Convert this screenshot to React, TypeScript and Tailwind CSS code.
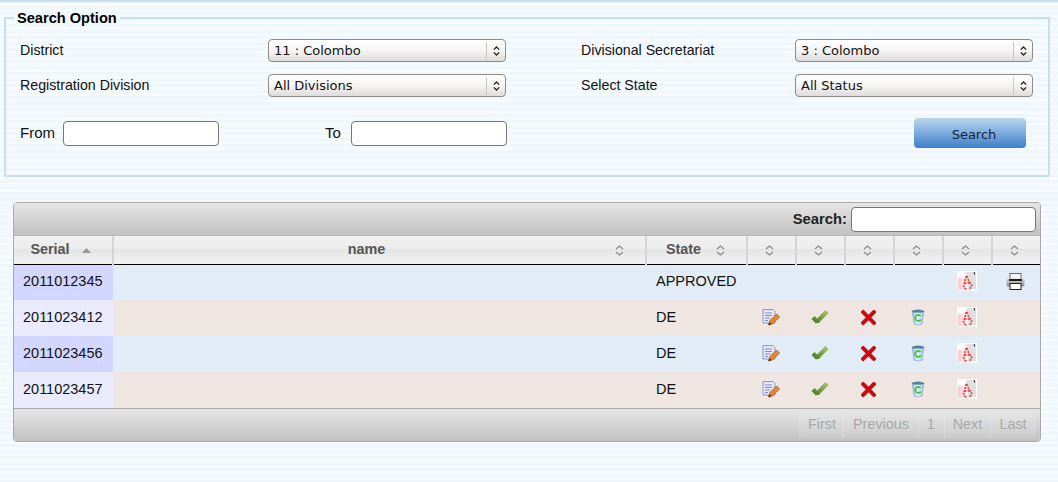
const ROWS = [
  { serial: '2011012345', state: 'APPROVED', actions: false, printable: true },
  { serial: '2011023412', state: 'DE', actions: true, printable: false },
  { serial: '2011023456', state: 'DE', actions: true, printable: false },
  { serial: '2011023457', state: 'DE', actions: true, printable: false },
]

const PAGER = [
  { label: 'First', width: 'w-[45px] pl-[3px]' },
  { label: 'Previous', width: 'w-[75px]' },
  { label: '1', width: 'w-[26px] pr-[1px]' },
  { label: 'Next', width: 'w-[46px]' },
  { label: 'Last', width: 'w-[46px] pr-[1px]' },
]

function Chevrons({ className = '' }: { className?: string }) {
  return (
    <svg width="9" height="11" viewBox="0 0 9 11" className={className} fill="none" stroke="currentColor" strokeWidth="1.2">
      <path d="M1 4 L4.5 1 L8 4" />
      <path d="M1 7 L4.5 10 L8 7" />
    </svg>
  )
}

function Select({ value }: { value: string }) {
  return (
    <div className="flex h-[23px] w-[238px] items-center rounded-[4px] border border-[#8f8b87] bg-gradient-to-b from-white via-[#f6f5f4] to-[#dedcda] text-[13px] text-[#111] font-['DejaVu_Sans',sans-serif]">
      <span className="flex-1 pl-[5px] leading-none">{value}</span>
      <span className="flex h-[17px] w-[19px] items-center justify-center border-l border-[#c9c7c4] text-[#222]">
        <svg width="7" height="10" viewBox="0 0 7 10" fill="none" stroke="currentColor" strokeWidth="1.3">
          <path d="M0.8 3.6 L3.5 1 L6.2 3.6" />
          <path d="M0.8 6.4 L3.5 9 L6.2 6.4" />
        </svg>
      </span>
    </div>
  )
}

function TextBox({ className }: { className: string }) {
  return <input type="text" className={`h-[25px] rounded-[4px] border border-[#767676] bg-white ${className}`} />
}

function SortHeader({ children, width, className = '', chevron = '', sort = 'both' }: { children?: string; width: string; className?: string; chevron?: string; sort?: 'both' | 'up' }) {
  return (
    <th className={`${width} border-l-2 border-[#d4d4d4] first:border-l-0 p-0 font-bold`}>
      <div className={`relative flex h-[27px] items-center justify-center pt-[1px] ${className}`}>
        {children && <span className="text-[14.4px] text-[#555]">{children}</span>}
        {sort === 'up' ? (
          <svg width="9" height="5" viewBox="0 0 9 5" className="ml-[12px] text-[#999]" fill="currentColor">
            <path d="M0 5 L4.5 0 L9 5 Z" />
          </svg>
        ) : (
          <Chevrons className={`text-[#888] ${chevron}`} />
        )}
      </div>
    </th>
  )
}

function EditIcon() {
  return (
    <svg width="18" height="18" viewBox="0 0 18 18">
      <path d="M1 1.5 H11 L13 3.5 V15 H1 Z" fill="#e4e8f8" stroke="#8d96cf" strokeWidth="1" />
      <path d="M3 5 H10 M3 7.5 H10 M3 10 H8 M3 12.5 H6" stroke="#7f88c8" strokeWidth="1" />
      <path d="M6.5 17 L8 12.5 L14.5 6 L17.5 9 L11 15.5 Z" fill="#e8872c" stroke="#8a4f20" strokeWidth="0.7" />
      <path d="M6.5 17.3 L7.6 14.4 L9.6 16.2 Z" fill="#3b2a1a" />
    </svg>
  )
}

function CheckIcon() {
  return (
    <svg width="18" height="16" viewBox="0 0 18 16">
      <defs>
        <linearGradient id="check-fill" x1="1" x2="0" y1="0" y2="1">
          <stop offset="0" stopColor="#a3c26e" />
          <stop offset="1" stopColor="#4e7d2a" />
        </linearGradient>
      </defs>
      <path d="M2 8.5 L6.2 12.6 L16 2.4" fill="none" stroke="url(#check-fill)" strokeWidth="4.4" strokeLinejoin="bevel" />
    </svg>
  )
}

function CrossIcon() {
  return (
    <svg width="15" height="15" viewBox="0 0 15 15">
      <path d="M2.2 2.2 L12.8 12.8 M12.8 2.2 L2.2 12.8" stroke="#cc0a12" strokeWidth="4" strokeLinecap="square" />
    </svg>
  )
}

function BinIcon() {
  return (
    <svg width="14" height="17" viewBox="0 0 14 17">
      <defs>
        <linearGradient id="bin-fill" x1="0" x2="1" y1="0" y2="0">
          <stop offset="0" stopColor="#9cc3e2" />
          <stop offset="0.5" stopColor="#e4f1fa" />
          <stop offset="1" stopColor="#9cc3e2" />
        </linearGradient>
      </defs>
      <ellipse cx="7" cy="2.5" rx="6.4" ry="1.9" fill="#55819f" />
      <path d="M1.5 3.5 L3 15 Q7 17 11 15 L12.5 3.5 Z" fill="url(#bin-fill)" stroke="#7fa5c2" strokeWidth="0.7" />
      <path d="M9.5 7 A3 3 0 1 0 9.8 10.5" fill="none" stroke="#45c23c" strokeWidth="1.7" />
    </svg>
  )
}

function PdfIcon() {
  return (
    <svg width="20" height="20" viewBox="0 0 20 20">
      <defs>
        <linearGradient id="pdf-fade" x1="0" x2="1" y1="0" y2="0">
          <stop offset="0" stopColor="#ffc4c4" />
          <stop offset="1" stopColor="#ffffff" />
        </linearGradient>
      </defs>
      <rect width="20" height="20" fill="#fff" />
      <path d="M9 1 H17 L19 3 V18 H11 Z" fill="#e0e0e0" />
      <rect x="1" y="7" width="10" height="12" fill="url(#pdf-fade)" />
      <path d="M17.5 1 V3.5" stroke="#444" strokeWidth="1.2" />
      <path d="M9.5 5 C7.5 7.5 9 10 7 13 C6 15.5 7.5 18 10 18.5 M9.5 5 C12 7.5 10 10 14 12.5 C15.5 14.5 14 17 11.5 18.5 M7.5 12 H14" fill="none" stroke="#f03c3c" strokeWidth="1.6" strokeDasharray="2.2 1" />
    </svg>
  )
}

function PrintIcon() {
  return (
    <svg width="19" height="17" viewBox="0 0 19 17">
      <defs>
        <linearGradient id="print-body" x1="0" x2="0" y1="0" y2="1">
          <stop offset="0" stopColor="#d8d8d8" />
          <stop offset="1" stopColor="#8a8a8a" />
        </linearGradient>
      </defs>
      <rect x="4" y="0.5" width="11" height="6" fill="#f4f4f4" stroke="#666" strokeWidth="1" />
      <rect x="0.5" y="5.5" width="18" height="8" rx="1.5" fill="url(#print-body)" />
      <rect x="3" y="6" width="13" height="2" fill="#1c1c1c" />
      <rect x="4" y="10.5" width="11" height="6" fill="#fff" stroke="#222" strokeWidth="1" />
    </svg>
  )
}

function IconCell({ children }: { children?: React.ReactNode }) {
  return (
    <td className="p-0">
      <div className="flex items-center justify-center pr-[2px] pb-[2px]">{children}</div>
    </td>
  )
}

export default function App() {
  return (
    <div className="h-[482px] w-[1058px] overflow-hidden bg-[repeating-linear-gradient(180deg,#f0f7fc_0,#f0f7fc_3px,#f7fbfe_3px,#f7fbfe_6px)] font-['Liberation_Sans',Arial,sans-serif] text-[14.2px] text-[#111]">
      <div className="h-[2px] bg-[#c5dff0]" />

      <fieldset className="mx-1 mt-[8px] h-[167px] w-[1046px] border-2 border-[#c5dff0] px-[14px]">
        <legend className="-ml-[6px] px-[3px] text-[14.6px] leading-[16px] font-bold text-black">Search Option</legend>

        <div className="mt-[13px] grid grid-cols-[248px_238px_75px_214px_238px] items-center gap-y-3">
          <span>District</span>
          <Select value="11 : Colombo" />
          <span />
          <span>Divisional Secretariat</span>
          <Select value="3 : Colombo" />
          <span>Registration Division</span>
          <Select value="All Divisions" />
          <span />
          <span>Select State</span>
          <Select value="All Status" />
        </div>

        <div className="mt-[21px] flex items-center">
          <span className="w-[43px] text-[15px]">From</span>
          <TextBox className="w-[156px]" />
          <span className="ml-[106px] w-[26px] text-[15px]">To</span>
          <TextBox className="w-[156px]" />
          <button className="ml-auto mr-[8px] h-[30px] w-[112px] rounded-[4px] bg-gradient-to-b from-[#bad7ee] to-[#3d7fc9] pt-[3px] pl-[8px] text-[13px] text-[#10233c] font-['DejaVu_Sans',sans-serif]">
            Search
          </button>
        </div>
      </fieldset>

      <div className="mx-[13px] mt-[25px] h-[240px] w-[1028px] overflow-hidden rounded-[4px] border border-[#aaa]">
        <div className="flex h-[33px] items-center justify-end border-b border-[#b8b8b8] bg-gradient-to-b from-[#e6e6e6] to-[#c2c2c2] pr-1">
          <label className="mr-1 text-[14.8px] font-bold text-[#222]">Search:</label>
          <TextBox className="w-[185px]" />
        </div>

        <table className="w-full table-fixed border-collapse text-[14.5px] text-[#111]">
          <thead>
            <tr className="h-[28px] border-b border-black bg-[linear-gradient(180deg,#f0f0f0_0,#ececec_50%,#e4e4e4_50%,#f2f2f2_100%)]">
              <SortHeader width="w-[99px]" sort="up" className="pr-[5px]">Serial</SortHeader>
              <SortHeader width="w-[533px]" className="pr-[26px]" chevron="absolute right-[21px]">name</SortHeader>
              <SortHeader width="w-[101px]" className="pr-[26px]" chevron="absolute right-[21px]">State</SortHeader>
              <SortHeader width="w-[49px]" className="pr-[4px]" />
              <SortHeader width="w-[49px]" className="pr-[4px]" />
              <SortHeader width="w-[49px]" className="pr-[4px]" />
              <SortHeader width="w-[49px]" className="pr-[4px]" />
              <SortHeader width="w-[49px]" className="pr-[4px]" />
              <SortHeader width="w-[48px]" className="pr-[4px]" />
            </tr>
          </thead>
          <tbody>
            {ROWS.map((row, i) => (
              <tr key={row.serial} className={`h-[36px] ${i % 2 === 0 ? 'bg-[#e1ecf6]' : 'bg-[#efe6e2]'}`}>
                <td className={`pl-[9px] ${i % 2 === 0 ? 'bg-[#d3d6ff]' : 'bg-[#eaebff]'}`}>{row.serial}</td>
                <td />
                <td className="pl-[10px]">{row.state}</td>
                <IconCell>{row.actions && <EditIcon />}</IconCell>
                <IconCell>{row.actions && <CheckIcon />}</IconCell>
                <IconCell>{row.actions && <CrossIcon />}</IconCell>
                <IconCell>{row.actions && <BinIcon />}</IconCell>
                <IconCell><PdfIcon /></IconCell>
                <IconCell>{row.printable && <PrintIcon />}</IconCell>
              </tr>
            ))}
          </tbody>
        </table>

        <div className="flex h-[33px] items-center justify-end border-t border-[#aaa] bg-gradient-to-b from-[#e6e6e6] to-[#c2c2c2] pr-1">
          <div className="flex h-[25px] items-center overflow-hidden rounded-[4px] text-[14.4px] text-[#a8a8a8]">
            {PAGER.map(({ label, width }) => (
              <span key={label} className={`flex h-full items-center justify-center border-l border-white/20 bg-white/10 first:border-l-0 ${width}`}>{label}</span>
            ))}
          </div>
        </div>
      </div>
    </div>
  )
}
